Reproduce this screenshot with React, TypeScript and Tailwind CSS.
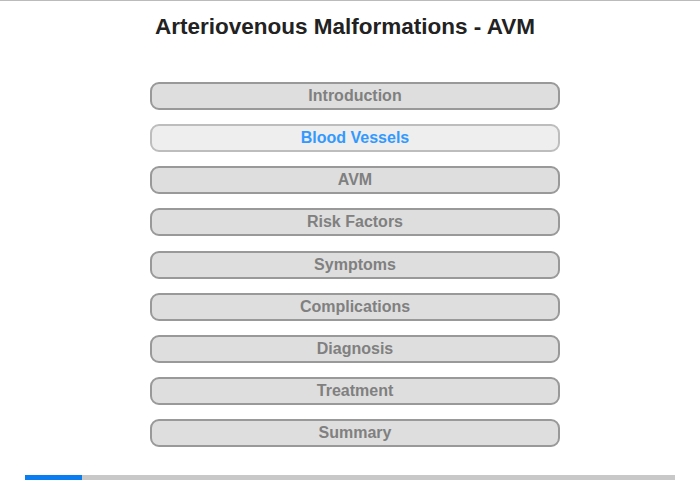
const items = [
  'Introduction',
  'Blood Vessels',
  'AVM',
  'Risk Factors',
  'Symptoms',
  'Complications',
  'Diagnosis',
  'Treatment',
  'Summary',
]

export default function App() {
  const active = 1

  return (
    <div className="w-[700px] h-[480px] bg-white border-t border-[#bbbbbb] flex flex-col font-['Liberation_Sans',Arial,sans-serif]">
      {/* Title */}
      <div className="flex justify-center pr-[10px] pt-[12px]">
        <h1 className="text-[22.5px] leading-[28px] font-bold text-[#222222]">
          Arteriovenous Malformations - AVM
        </h1>
      </div>

      {/* Menu */}
      <div className="flex flex-col gap-[14.125px] mt-[41px] ml-[150px] w-[410px]">
        {items.map((label, i) => (
          <button
            key={label}
            className={
              i === active
                ? 'h-[28px] rounded-[9px] border-2 border-[#bdbdbd] bg-[#eeeeee] text-[16px] font-bold text-[#3399ff] leading-none'
                : 'h-[28px] rounded-[9px] border-2 border-[#999999] bg-[#dedede] text-[16px] font-bold text-[#808080] leading-none'
            }
          >
            {label}
          </button>
        ))}
      </div>

      {/* Progress */}
      <div className="mt-auto mx-[25px] h-[5px] bg-[#c8c8c8] flex">
        <div className="w-[57px] h-full bg-[#0a7ef0]" />
      </div>
    </div>
  )
}
